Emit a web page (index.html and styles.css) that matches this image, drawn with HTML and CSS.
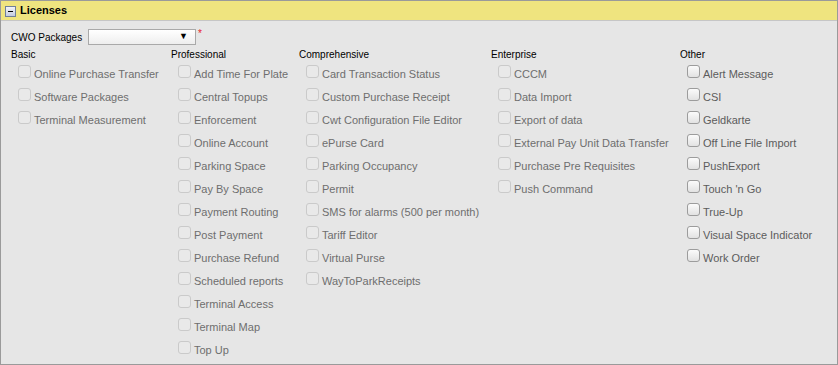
FILE: index.html
```html
<!DOCTYPE html>
<html lang="en">

<head>
    <meta charset="UTF-8">
    <meta name="viewport" content="width=device-width, initial-scale=1.0">
    <title>Licenses</title>
    <link rel="stylesheet" href="styles.css">
</head>

<body>
    <div class="panel">
        <div class="panel-header">
            <span class="toggle"></span>
            <span class="title">Licenses</span>
        </div>
        <div class="panel-body">
            <div class="package-row">
                <label for="cwo">CWO Packages</label>
                <div class="select" id="cwo"><span class="arrow">&#9660;</span></div>
                <span class="required">*</span>
            </div>

            <div class="columns">
                <div class="group">
                    <div class="group-title">Basic</div>
                    <div class="item disabled"><span class="box"></span>Online Purchase Transfer</div>
                    <div class="item disabled"><span class="box"></span>Software Packages</div>
                    <div class="item disabled"><span class="box"></span>Terminal Measurement</div>
                </div>
                <div class="group">
                    <div class="group-title">Professional</div>
                    <div class="item disabled"><span class="box"></span>Add Time For Plate</div>
                    <div class="item disabled"><span class="box"></span>Central Topups</div>
                    <div class="item disabled"><span class="box"></span>Enforcement</div>
                    <div class="item disabled"><span class="box"></span>Online Account</div>
                    <div class="item disabled"><span class="box"></span>Parking Space</div>
                    <div class="item disabled"><span class="box"></span>Pay By Space</div>
                    <div class="item disabled"><span class="box"></span>Payment Routing</div>
                    <div class="item disabled"><span class="box"></span>Post Payment</div>
                    <div class="item disabled"><span class="box"></span>Purchase Refund</div>
                    <div class="item disabled"><span class="box"></span>Scheduled reports</div>
                    <div class="item disabled"><span class="box"></span>Terminal Access</div>
                    <div class="item disabled"><span class="box"></span>Terminal Map</div>
                    <div class="item disabled"><span class="box"></span>Top Up</div>
                </div>
                <div class="group">
                    <div class="group-title">Comprehensive</div>
                    <div class="item disabled"><span class="box"></span>Card Transaction Status</div>
                    <div class="item disabled"><span class="box"></span>Custom Purchase Receipt</div>
                    <div class="item disabled"><span class="box"></span>Cwt Configuration File Editor</div>
                    <div class="item disabled"><span class="box"></span>ePurse Card</div>
                    <div class="item disabled"><span class="box"></span>Parking Occupancy</div>
                    <div class="item disabled"><span class="box"></span>Permit</div>
                    <div class="item disabled"><span class="box"></span>SMS for alarms (500 per month)</div>
                    <div class="item disabled"><span class="box"></span>Tariff Editor</div>
                    <div class="item disabled"><span class="box"></span>Virtual Purse</div>
                    <div class="item disabled"><span class="box"></span>WayToParkReceipts</div>
                </div>
                <div class="group">
                    <div class="group-title">Enterprise</div>
                    <div class="item disabled"><span class="box"></span>CCCM</div>
                    <div class="item disabled"><span class="box"></span>Data Import</div>
                    <div class="item disabled"><span class="box"></span>Export of data</div>
                    <div class="item disabled"><span class="box"></span>External Pay Unit Data Transfer</div>
                    <div class="item disabled"><span class="box"></span>Purchase Pre Requisites</div>
                    <div class="item disabled"><span class="box"></span>Push Command</div>
                </div>
                <div class="group">
                    <div class="group-title">Other</div>
                    <div class="item"><span class="box"></span>Alert Message</div>
                    <div class="item"><span class="box"></span>CSI</div>
                    <div class="item"><span class="box"></span>Geldkarte</div>
                    <div class="item"><span class="box"></span>Off Line File Import</div>
                    <div class="item"><span class="box"></span>PushExport</div>
                    <div class="item"><span class="box"></span>Touch 'n Go</div>
                    <div class="item"><span class="box"></span>True-Up</div>
                    <div class="item"><span class="box"></span>Visual Space Indicator</div>
                    <div class="item"><span class="box"></span>Work Order</div>
                </div>
            </div>
        </div>
    </div>
</body>

</html>
```

FILE: styles.css
```css
* {
    box-sizing: border-box;
}

body {
    margin: 0;
    font-family: 'Liberation Sans', Arial, sans-serif;
    color: #000;
}

.panel {
    width: 838px;
    height: 365px;
    border: 1px solid #9a9a9a;
    background-color: #e6e6e6;
}

.panel-header {
    height: 20px;
    background-color: #efe47f;
    border-bottom: 1px solid #c6c6c6;
    display: flex;
    align-items: center;
    padding-left: 4px;
    gap: 4px;
}

.toggle {
    position: relative;
    width: 11px;
    height: 11px;
    border: 1px solid #6f7f99;
    background: linear-gradient(#f2f4fa, #c3cbe0);
    margin-top: 1px;
}

.toggle::after {
    content: '';
    position: absolute;
    left: 2px;
    top: 4px;
    width: 5px;
    height: 1px;
    background-color: #000;
}

.title {
    font-size: 11px;
    font-weight: bold;
    padding-bottom: 2px;
}

.panel-body {
    padding: 8px 0 0 10px;
}

.package-row {
    display: flex;
    align-items: center;
    font-size: 10px;
    height: 16px;
}

.package-row label {
    width: 77px;
}

.select {
    position: relative;
    width: 108px;
    height: 16px;
    border: 1px solid #a9a9a9;
    background: linear-gradient(#ffffff, #eeeeee);
}

.arrow {
    position: absolute;
    right: 7px;
    top: 1px;
    font-size: 9px;
}

.required {
    color: #e8202a;
    margin-left: 2px;
    font-size: 10px;
    align-self: flex-start;
    margin-top: -1px;
}

.columns {
    display: grid;
    grid-template-columns: 160px 128px 192px 189px 1fr;
    margin-top: 3px;
}

.group-title {
    font-size: 10px;
    height: 14px;
    line-height: 14px;
}

.item {
    display: flex;
    align-items: center;
    gap: 3px;
    height: 23px;
    padding-left: 7px;
    font-size: 11px;
    color: #5c5c5c;
}

.box {
    width: 13px;
    height: 13px;
    border: 1px solid #9c9c9c;
    border-radius: 3px;
    background: linear-gradient(#fbfbfb, #e2e2e2);
    margin-top: -4px;
}

.item.disabled {
    color: #6e6e6e;
}

.item.disabled .box {
    border-color: #cacaca;
    background: #e9e9e9;
}
```
